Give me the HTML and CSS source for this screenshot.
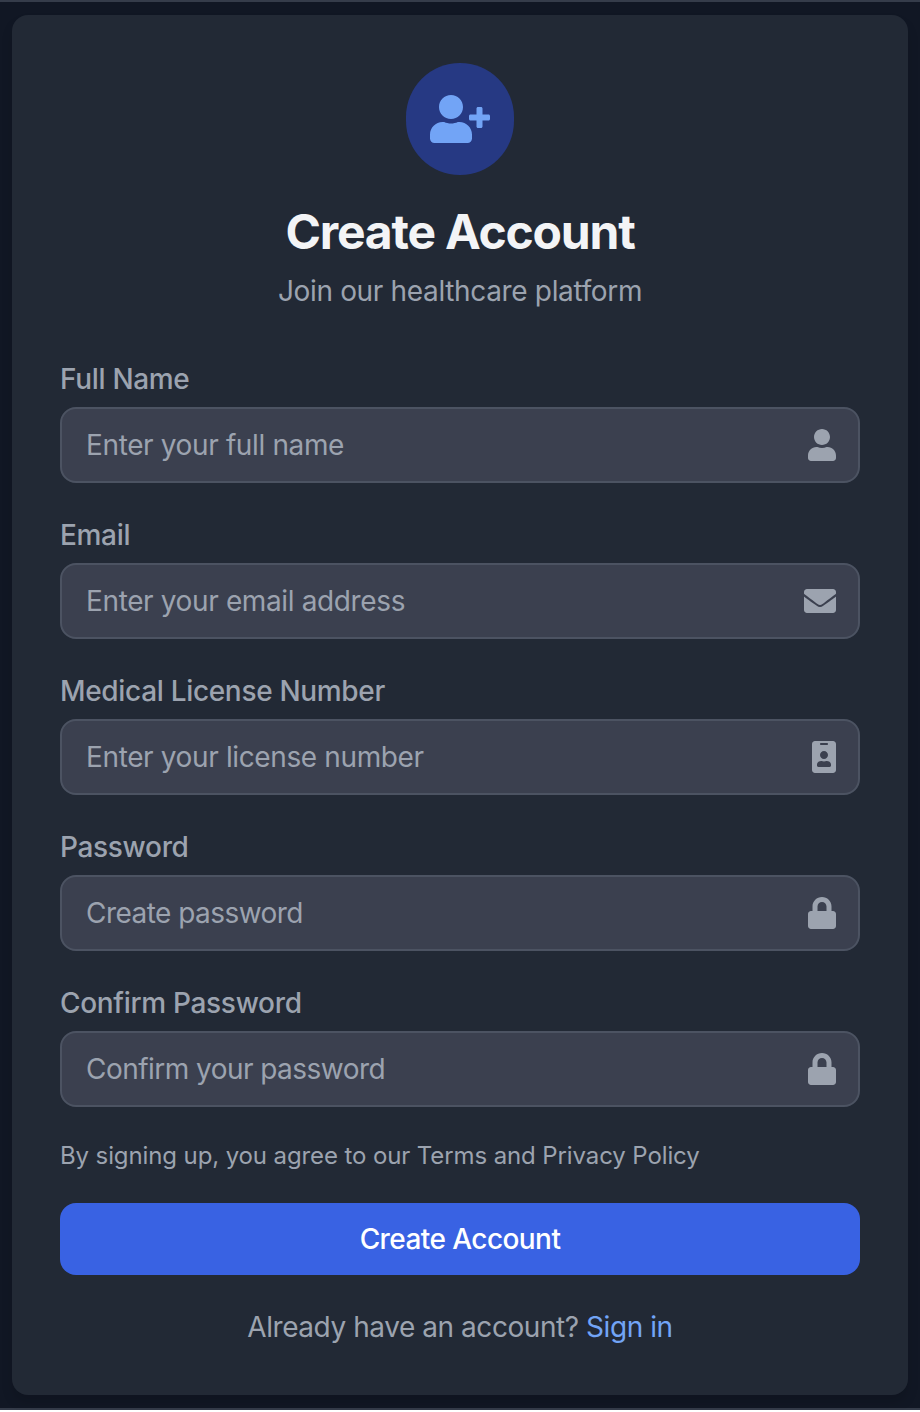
FILE: index.html
```html
<!DOCTYPE html>
<html lang="en">
<head>
<meta charset="utf-8">
<title>Create Account</title>
<link rel="stylesheet" href="styles.css">
</head>
<body>
<main class="page">
  <section class="card">
    <header class="intro">
      <div class="badge">
        <svg class="badge-icon" viewBox="0 0 640 512"><path d="M624 208h-64v-64c0-8.800-7.200-16-16-16h-32c-8.800 0-16 7.200-16 16v64h-64c-8.800 0-16 7.200-16 16v32c0 8.800 7.200 16 16 16h64v64c0 8.800 7.200 16 16 16h32c8.800 0 16-7.200 16-16v-64h64c8.800 0 16-7.200 16-16v-32c0-8.800-7.200-16-16-16zm-400 48c70.700 0 128-57.300 128-128S294.700 0 224 0 96 57.300 96 128s57.300 128 128 128zm89.600 32h-16.700c-22.200 10.200-46.900 16-72.900 16s-50.600-5.800-72.900-16h-16.700C60.200 288 0 348.200 0 422.400V464c0 26.500 21.500 48 48 48h352c26.500 0 48-21.500 48-48v-41.600c0-74.200-60.200-134.400-134.400-134.400z"/></svg>
      </div>
      <h1 class="title">Create Account</h1>
      <p class="subtitle">Join our healthcare platform</p>
    </header>
    <form class="form">
      <div class="field">
        <label class="label" for="name">Full Name</label>
        <div class="control">
          <input class="input" id="name" type="text" placeholder="Enter your full name">
          <svg class="icon icon-28" viewBox="0 0 448 512"><path d="M224 256c70.700 0 128-57.300 128-128S294.700 0 224 0 96 57.300 96 128s57.300 128 128 128zm89.600 32h-16.700c-22.200 10.200-46.900 16-72.900 16s-50.600-5.800-72.900-16h-16.700C60.200 288 0 348.200 0 422.400V464c0 26.500 21.500 48 48 48h352c26.500 0 48-21.500 48-48v-41.600c0-74.200-60.200-134.400-134.400-134.400z"/></svg>
        </div>
      </div>
      <div class="field">
        <label class="label" for="email">Email</label>
        <div class="control">
          <input class="input" id="email" type="email" placeholder="Enter your email address">
          <svg class="icon icon-32" viewBox="0 0 512 512"><path d="M502.300 190.800c3.900-3.100 9.700-.2 9.700 4.700V400c0 26.500-21.500 48-48 48H48c-26.500 0-48-21.500-48-48V195.600c0-5 5.700-7.800 9.700-4.700 22.400 17.400 52.100 39.500 154.100 113.600 21.100 15.400 56.700 47.800 92.200 47.600 35.700.3 72-32.800 92.300-47.600 102-74.100 131.600-96.300 154-113.700zM256 320c23.200.4 56.600-29.200 73.400-41.400 132.700-96.300 142.800-104.700 173.400-128.700 5.800-4.500 9.200-11.500 9.200-18.900v-19c0-26.500-21.500-48-48-48H48c-26.500 0-48 21.500-48 48v19c0 7.400 3.400 14.300 9.200 18.900 30.600 23.900 40.700 32.400 173.400 128.700 16.800 12.200 50.200 41.800 73.400 41.400z"/></svg>
        </div>
      </div>
      <div class="field">
        <label class="label" for="license">Medical License Number</label>
        <div class="control">
          <input class="input" id="license" type="text" placeholder="Enter your license number">
          <svg class="icon icon-24" viewBox="0 0 384 512"><path d="M336 0H48C21.500 0 0 21.500 0 48v416c0 26.500 21.500 48 48 48h288c26.500 0 48-21.500 48-48V48c0-26.500-21.500-48-48-48zM144 32h96c8.800 0 16 7.200 16 16s-7.200 16-16 16h-96c-8.800 0-16-7.200-16-16s7.200-16 16-16zm48 128c35.300 0 64 28.700 64 64s-28.700 64-64 64-64-28.700-64-64 28.700-64 64-64zm112 236.800c0 10.600-10 19.200-22.400 19.200H102.400C90 416 80 407.400 80 396.800v-19.200c0-31.800 30.100-57.600 67.200-57.600h5c12.300 5.100 25.700 8 39.800 8s27.600-2.900 39.800-8h5c37.100 0 67.200 25.800 67.200 57.600v19.200z"/></svg>
        </div>
      </div>
      <div class="field">
        <label class="label" for="password">Password</label>
        <div class="control">
          <input class="input input-password" id="password" type="password" placeholder="Create password">
          <svg class="icon icon-28" viewBox="0 0 448 512"><path d="M400 224h-24v-72C376 68.200 307.800 0 224 0S72 68.200 72 152v72H48c-26.500 0-48 21.500-48 48v192c0 26.500 21.500 48 48 48h352c26.500 0 48-21.500 48-48V272c0-26.500-21.500-48-48-48zm-104 0H152v-72c0-39.700 32.300-72 72-72s72 32.300 72 72v72z"/></svg>
        </div>
      </div>
      <div class="field">
        <label class="label" for="confirm">Confirm Password</label>
        <div class="control">
          <input class="input input-password" id="confirm" type="password" placeholder="Confirm your password">
          <svg class="icon icon-28" viewBox="0 0 448 512"><path d="M400 224h-24v-72C376 68.200 307.800 0 224 0S72 68.200 72 152v72H48c-26.500 0-48 21.500-48 48v192c0 26.500 21.500 48 48 48h352c26.500 0 48-21.500 48-48V272c0-26.500-21.500-48-48-48zm-104 0H152v-72c0-39.700 32.300-72 72-72s72 32.300 72 72v72z"/></svg>
        </div>
      </div>
      <p class="terms">By signing up, you agree to our Terms and Privacy Policy</p>
      <button class="submit" type="button">Create Account</button>
    </form>
    <p class="signin">Already have an account? <a class="link" href="#">Sign in</a></p>
  </section>
</main>
</body>
</html>
```
FILE: styles.css
```css
* { box-sizing: border-box; margin: 0; }
html { background: #fff; }
body {
  font-family: Inter, "Liberation Sans", sans-serif;
  color: #9ca3af;
}
.page {
  height: 1410px;
  padding: 13px 12px;
  border-top: 2px solid #353c4a;
  border-bottom: 2px solid #353c4a;
  background: #111724;
}
.card {
  height: 1380px;
  padding: 48px;
  border-radius: 16px;
  background: #222935;
  box-shadow: 0 8px 12px rgba(0, 0, 0, .12);
}
.intro { display: flex; flex-direction: column; align-items: center; }
.badge {
  display: flex;
  align-items: center;
  justify-content: center;
  width: 108px;
  height: 112px;
  border-radius: 9999px;
  background: #263983;
}
.badge-icon { width: 60px; height: 48px; fill: #72a4f6; }
.title {
  margin-top: 25px;
  line-height: 64px;
  font-size: 48px;
  font-weight: 700;
  letter-spacing: -1.2px;
  color: #f3f4f6;
  white-space: nowrap;
}
.subtitle {
  margin-top: 7px;
  line-height: 40px;
  font-size: 28px;
  letter-spacing: -.34px;
  white-space: nowrap;
}
.form { display: flex; flex-direction: column; margin-top: 48px; }
.field { height: 156px; }
.label {
  display: block;
  height: 48px;
  line-height: 41px;
  font-size: 28px;
  font-weight: 500;
  letter-spacing: -.32px;
}
.control { position: relative; height: 76px; }
.input {
  display: block;
  width: 100%;
  height: 76px;
  padding: 0 80px 0 24px;
  border: 2px solid #4c5362;
  border-radius: 16px;
  background: #3b404f;
  font: inherit;
  font-size: 28px;
  letter-spacing: -.37px;
  color: #f3f4f6;
}
.input-password { letter-spacing: -.54px; }
.input::placeholder { color: #9ca3af; opacity: 1; }
.icon { position: absolute; top: 22px; right: 24px; height: 32px; fill: #9ca3af; }
.icon-24 { width: 24px; }
.icon-28 { width: 28px; }
.icon-32 { width: 32px; }
.terms {
  line-height: 34px;
  font-size: 24px;
  letter-spacing: -.11px;
  white-space: nowrap;
}
.submit {
  height: 72px;
  margin-top: 30px;
  border: 0;
  border-radius: 16px;
  background: #3962e3;
  color: #fff;
  font: inherit;
  font-size: 28px;
  font-weight: 500;
  letter-spacing: -.57px;
}
.signin {
  margin-top: 32px;
  line-height: 40px;
  font-size: 28px;
  letter-spacing: -.44px;
  text-align: center;
  white-space: nowrap;
}
.link { color: #72a4f6; text-decoration: none; }
```
